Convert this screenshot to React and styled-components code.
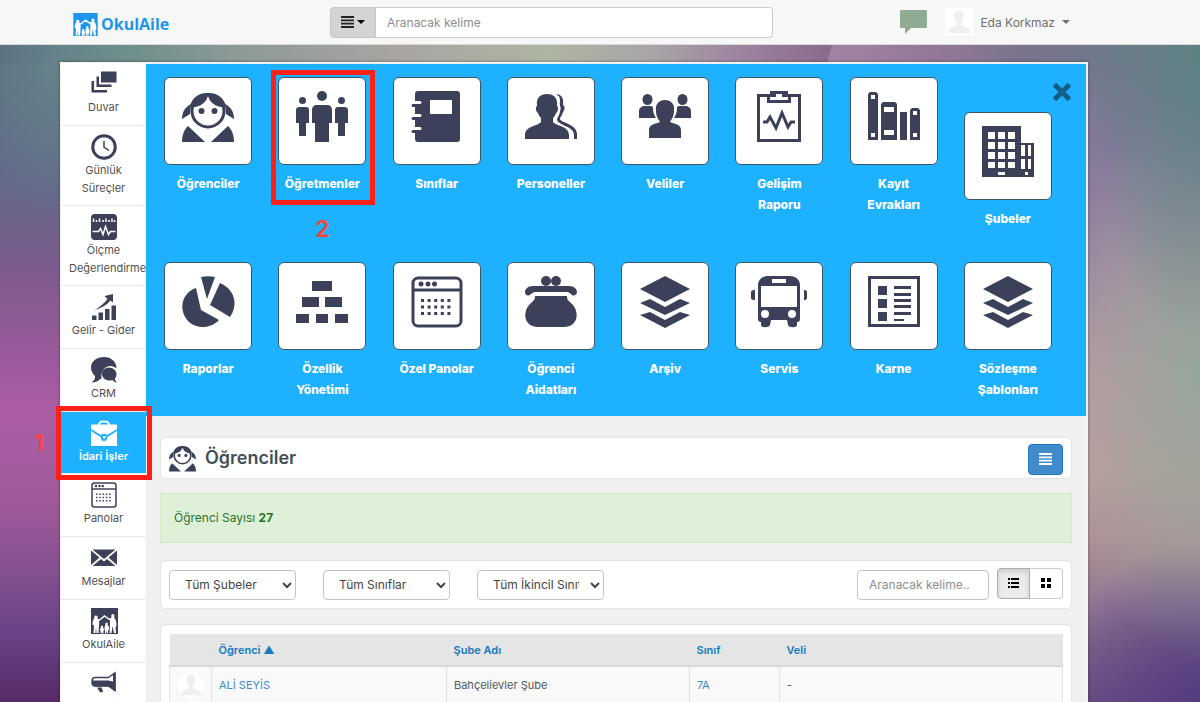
import React, { useState } from "react";
import styled, { createGlobalStyle, css } from "styled-components";

const INK = "#3c4159";
const BLUE = "#1eb1ff";

const GlobalStyle = createGlobalStyle`
  * {
    box-sizing: border-box;
  }
  body {
    margin: 0;
    font-family: Inter, "Noto Sans", sans-serif;
    font-size: 12px;
    color: #555;
  }
  button, input, select {
    font-family: inherit;
  }
  a {
    color: #428bca;
    text-decoration: none;
  }
`;

const Page = styled.div`
  height: 100vh;
  overflow: hidden;
  display: flex;
  flex-direction: column;
  background:
    linear-gradient(105deg, transparent 803px, rgba(175, 145, 175, 0.65) 804px, transparent 980px) 0 45px / 100% 20px no-repeat,
    linear-gradient(90deg, #5b7282 0, #66838a 60px, #6f8f8c 130px, #8d9a98 240px, #a9a5a2 400px, #aeb5a2 550px, #a9a5a7 650px, #9d86a0 735px, #8a6a8a 830px, #87708d 940px, #73788c 1080px, #5e8284 1200px) 0 45px / 100% 18px no-repeat,
    radial-gradient(ellipse 90px 150px at 60px 0, #66838a, transparent) 0 63px / 60px 200px no-repeat,
    radial-gradient(ellipse 112px 280px at 100% 0, #5e8284, transparent) 100% 63px / 112px 640px no-repeat,
    radial-gradient(ellipse 140px 290px at 100% 310px, #97a69a, transparent) 100% 63px / 112px 640px no-repeat,
    radial-gradient(ellipse 150px 160px at 100% 640px, #553c80, transparent) 100% 63px / 112px 640px no-repeat,
    linear-gradient(180deg, #5b7282 63px, #65698a 190px, #7d5b8d 270px, #a05a9f 370px, #ab5ea5 410px, #a05a9c 500px, #85508f 570px, #6a4487 630px, #552a66 702px) 0 0 / 60px 100% no-repeat,
    linear-gradient(180deg, #73788c 63px, #85799a 150px, #95809f 220px, #a88fa4 300px, #b89ba1 380px, #bb9e9e 470px, #ae9296 540px, #937a94 600px, #7b6389 650px, #6b4f84 702px) 100% 0 / 112px 100% no-repeat,
    #8a6a8a;
`;

const Header = styled.header`
  flex: none;
  height: 45px;
  padding: 0 112px 0 60px;
  background: #f7f7f7;
  border-bottom: 1px solid #d8d8d8;
  display: grid;
  grid-template-columns: 270px 1fr 315px;
  align-items: center;
`;

const Logo = styled.a`
  display: flex;
  align-items: center;
  gap: 3px;
  padding: 4px 0 0 13px;
  color: #1c96ec;
  font-family: "Open Sans", "Noto Sans", sans-serif;
  font-size: 16px;
  line-height: 24px;
  font-weight: 700;
`;

const SearchGroup = styled.div`
  display: flex;
  height: 31px;
`;

const SearchType = styled.button`
  width: 46px;
  padding: 0;
  display: flex;
  align-items: center;
  justify-content: center;
  gap: 3px;
  border: 1px solid #c6c6c6;
  border-radius: 4px 0 0 4px;
  background: #d4d4d4;
`;

const SearchInput = styled.input`
  flex: 1;
  min-width: 0;
  padding: 0 11px;
  border: 1px solid #ccc;
  border-left: 0;
  border-radius: 0 4px 4px 0;
  background: #fff;
  font-size: 12px;
  &::placeholder {
    color: #8e8e8e;
  }
`;

const UserArea = styled.div`
  display: flex;
  align-items: center;
  justify-content: flex-end;
  padding-right: 18px;
`;

const IconButton = styled.button`
  display: flex;
  padding: 0;
  border: 0;
  background: none;
`;

const UserMenu = styled.button`
  display: flex;
  align-items: center;
  gap: 7px;
  margin-left: 18px;
  padding: 0;
  border: 0;
  background: none;
  color: #6f6f6f;
  font-size: 12px;
`;

const Caret = styled.span`
  border: 4px solid transparent;
  border-top-color: currentColor;
  border-bottom: 0;
`;

const Wrap = styled.div`
  flex: 1;
  min-height: 0;
  margin: 17px 112px 0 60px;
  display: flex;
  border: 1px solid #f2f2f2;
  border-right-width: 2px;
  border-bottom: 0;
  background: #f0f0f0;
  box-shadow: 0 0 3px rgba(0, 0, 0, 0.4);
`;

const Sidebar = styled.nav`
  flex: none;
  width: 85px;
  background: #fff;
`;

const SideItem = styled.div`
  position: relative;
`;

const SideLink = styled.a`
  display: block;
  min-height: ${p => (p.$active ? 62 : 63)}px;
  padding: 8px;
  border-bottom: 1px solid #e9e9e9;
  overflow: hidden;
  color: #505050;
  font-size: 11px;
  line-height: 18px;
  text-align: center;
  svg {
    display: block;
    margin: 0 auto 1px;
  }
  ${p =>
    p.$active &&
    css`
      background: ${BLUE};
      color: #fff;
      font-weight: 600;
    `}
`;

const Main = styled.main`
  flex: 1;
  min-width: 0;
  overflow: hidden;
`;

const MenuPanel = styled.section`
  display: grid;
  grid-template-columns: repeat(8, 1fr);
  row-gap: 33px;
  margin-top: 1px;
  padding: 13px 21px 16px 5px;
  background: ${BLUE};
`;

const MenuCell = styled.div`
  position: relative;
  display: flex;
  flex-direction: column;
  align-items: center;
`;

const CloseButton = styled.button`
  height: 35px;
  align-self: flex-end;
  margin-right: -7px;
  padding: 5px 0 10px;
  border: 0;
  background: none;
`;

const MenuLink = styled.a`
  display: flex;
  flex-direction: column;
  align-items: center;
  gap: 8px;
  width: 82px;
  color: #fff;
  font-size: 12px;
  font-weight: 800;
  line-height: 21px;
  text-align: center;
`;

const Tile = styled.span`
  flex: none;
  width: 88px;
  height: 88px;
  padding-top: 13px;
  display: flex;
  justify-content: center;
  border: 1px solid #3d5666;
  border-radius: 6px;
  background: #fff;
`;

// red frame laid over the steps of the guide
const Frame = styled.span`
  position: absolute;
  border: 5px solid #fb2018;
  inset: ${p => p.$inset};
  z-index: 2;
  pointer-events: none;
`;

const StepNumber = styled.span`
  position: absolute;
  left: ${p => p.$left};
  top: ${p => p.$top};
  transform: translate(-50%, -50%);
  color: #ff4133;
  font-size: 23px;
  line-height: 24px;
  font-weight: 600;
`;

const Content = styled.div`
  padding: 21px 14px 0;
  display: flex;
  flex-direction: column;
`;

const Box = styled.section`
  border: 1px solid #e4e4e4;
  border-radius: 5px;
  background: #fff;
  padding: 8px;
`;

const TitleBar = styled(Box)`
  display: flex;
  align-items: center;
  height: 42px;
`;

const Title = styled.h1`
  flex: 1;
  margin: 0 0 0 9px;
  color: #3f4f58;
  font-size: 18px;
  line-height: 24px;
  font-weight: 600;
`;

const PrimaryButton = styled.button`
  width: 35px;
  height: 31px;
  padding: 0;
  margin-top: 2px;
  display: flex;
  align-items: center;
  justify-content: center;
  border: 1px solid #1f78bf;
  border-radius: 4px;
  background: #428bca;
`;

const Notice = styled.p`
  margin: 14px 0 17px;
  padding: 15px 13px;
  border: 1px solid #d6e9c6;
  background: #dff0d8;
  color: #2b722d;
  font-size: 12px;
  line-height: 18px;
`;

const FilterBar = styled(Box)`
  display: flex;
  align-items: center;
  gap: 27px;
  height: 49px;
`;

const SelectBox = styled.select`
  width: 127px;
  height: 30px;
  padding: 0 8px 0 11px;
  border: 1px solid #c4c4c4;
  border-radius: 4px;
  background: #fff;
  color: #444;
  font-size: 12px;
`;

const FilterRight = styled.div`
  display: flex;
  align-items: center;
  gap: 8px;
  margin-left: auto;
`;

const FilterInput = styled.input`
  width: 132px;
  height: 30px;
  padding: 0 11px;
  border: 1px solid #c4c4c4;
  border-radius: 4px;
  font-size: 12px;
  &::placeholder {
    color: #8e8e8e;
  }
`;

const ToggleGroup = styled.div`
  display: flex;
  margin-top: -3px;
`;

const Toggle = styled.button`
  width: 33px;
  height: 31px;
  padding: 0;
  display: flex;
  align-items: center;
  justify-content: center;
  border: 1px solid #ccc;
  border-radius: 0 4px 4px 0;
  background: #fff;
  & + & {
    border-left: 0;
  }
  &:first-child {
    border-radius: 4px 0 0 4px;
  }
  ${p =>
    p.$on &&
    css`
      border-color: #adadad;
      background: #ebebeb;
      box-shadow: inset 0 3px 5px rgba(0, 0, 0, 0.125);
    `}
`;

const TableBox = styled(Box)`
  margin-top: 15px;
  padding-top: 9px;
`;

const Table = styled.table`
  width: 100%;
  border-collapse: collapse;
  table-layout: fixed;
  font-size: 11px;
  line-height: 16px;
  th {
    height: 32px;
    padding: 0 7px;
    background: #e5e5e5;
    border-bottom: 2px solid #d9d9d9;
    text-align: left;
    font-weight: 600;
    a {
      color: #147ac4;
    }
  }
  td {
    height: 38px;
    padding: 0 7px;
    background: #f9f9f9;
    border: 1px solid #e2e2e2;
    color: #4f5a61;
  }
`;

const PhotoCell = styled.td`
  svg {
    display: block;
    margin: auto;
  }
`;

/* ---------- icons ---------- */

const familyFigures = (
  <>
    <path d="M10 23l7 1 10-8 10 7 8-4" fill="none" stroke="#fff" strokeWidth="3" />
    <path
      fill="#fff"
      d="M9 15a4 4 0 014 6c3 2 4 7 3 13l-1 16h-4l-1-12-1 12H5l1-15-3-2c0-6 1-10 4-13-1-3 0-5 2-5zM43 12c4 0 5 4 3 7 4 3 5 10 5 17l-2 2 1 12h-4l-3-14-2 14h-4l1-19c-1-6 0-9 3-12-1-4 0-7 2-7z"
    />
    <path
      fill="#fff"
      d="M31 29c3 0 3 3 2 5 3 1 3 5 3 9l-2 2v6h-2l-1-6-1 6h-2v-6l-1-2c0-4 0-7 2-9-1-3 0-5 2-5zM22 35c2 0 3 2 2 4l2 3-1 5v4h-2l-1-4-1 4h-2v-4l-1-5 2-3c-1-2 0-4 2-4z"
    />
  </>
);

const icons = {
  wall: (
    <>
      <path d="M20 1h31v22H20z" />
      <path d="M11 11h5v16h25v5H11z" />
      <path d="M1 20h5v18h26v5H1z" />
    </>
  ),
  clock: (
    <>
      <circle cx="26" cy="26" r="22.500" fill="none" stroke="currentColor" strokeWidth="6" />
      <path d="M26 14v12l10 7" fill="none" stroke="currentColor" strokeWidth="3" />
    </>
  ),
  measure: (
    <>
      <rect width="52" height="52" rx="8" />
      <path
        d="M5 9v7M11 12v4M17 9v7M24 12v4M30 9v7M36 12v4M42 9v7M47 12v4"
        stroke="#fff"
        strokeWidth="3"
      />
      <path d="M3 35h12l4-6 5 12 5-16 6 16 4-6h10" fill="none" stroke="#fff" strokeWidth="3" />
    </>
  ),
  income: (
    <>
      <path d="M2 43h9v9H2zM15 37h9v15h-9zM28 30h9v22h-9zM41 23h9v29h-9z" />
      <path d="M7 32C18 26 26 19 33 10l-6-6 17-4v17l-5-4C30 23 20 29 7 32z" />
    </>
  ),
  chat: (
    <>
      <path d="M26 0C11 0 0 9 0 21c0 8 4 13 8 17 1 5-2 9-7 13 8 0 14-3 17-7h3c-2-13 5-25 17-26 6 0 10 2 13 5C51 9 40 0 26 0z" />
      <path d="M36 21c-8 0-14 6-14 13s6 13 14 13c3 0 5 0 7-1 2 3 5 5 9 5-3-3-4-5-4-8 2-3 3-5 3-9 0-7-7-13-15-13z" />
    </>
  ),
  briefcase: (
    <>
      <path d="M14 10c0-6 4-9 12-9s12 3 12 9h-4c0-4-2-5-8-5s-8 1-8 5z" />
      <path d="M0 9h52v9L31 31v-3H21v3L0 18z" />
      <path d="M0 22l20 13c0 4 1 7 6 7s6-3 6-7l20-13v30H0z" />
      <path d="M24 32h5v3c0 3-5 3-5 0z" />
    </>
  ),
  board: (
    <>
      <rect x="2" y="2" width="48" height="48" rx="5" fill="none" stroke="currentColor" strokeWidth="3" />
      <path d="M2 14h48" stroke="currentColor" strokeWidth="3" />
      <circle cx="10" cy="8" r="2.500" />
      <circle cx="17" cy="8" r="2.500" />
      <circle cx="23.500" cy="8" r="2.500" />
      <path
        d="M10 24.500h30M10 31h30M10 37.500h30"
        stroke="currentColor"
        strokeWidth="3"
        strokeDasharray="3 3.600"
      />
    </>
  ),
  mail: (
    <>
      <path d="M3 9h46L26 28z" />
      <path d="M0 11l17 14L0 40zM52 11L35 25l17 15z" />
      <path d="M3 42l17-14 6 5 6-5 17 14z" />
    </>
  ),
  family: (
    <>
      <path d="M0 0h54v52H0z" />
      {familyFigures}
    </>
  ),
  megaphone: (
    <>
      <path
        d="M35 13L48 4v35L35 30H8c-8 0-8-17 0-17z"
        fill="none"
        stroke="currentColor"
        strokeWidth="3"
      />
      <path d="M2 19h33l13 3v17L35 31H8c-4-2-6-6-6-12zM12 33h9l3 7c0 3-5 4-7 1z" />
      <path d="M44 4h5v35h-5z" />
    </>
  ),
  girl: (
    <>
      <circle cx="26" cy="20" r="16" fill="none" stroke="currentColor" strokeWidth="3" />
      <path d="M25 2c-9 0-16 6-17 14 9 1 17-4 18-12 1 8 9 13 18 12C43 8 36 2 27 2z" />
      <path d="M9 13C3 16 0 21 0 28l8-5zM43 13c6 3 9 8 9 15l-8-5z" />
      <circle cx="19.500" cy="20" r="3" />
      <circle cx="32.500" cy="20" r="3" />
      <path d="M6 35l17 16H0c0-7 2-12 6-16zM46 35L29 51h23c0-7-2-12-6-16z" />
    </>
  ),
  people: (
    <>
      <circle cx="26" cy="5" r="5" />
      <circle cx="6.500" cy="9.500" r="3.500" />
      <circle cx="45.500" cy="9.500" r="3.500" />
      <path d="M21 14h10c3 0 5 2 5 5v13h-3v19H19V32h-3V19c0-3 2-5 5-5z" />
      <path d="M4 16h6c2 0 3 1 3 3v13h-3v13H3V32H0V19c0-2 1-3 4-3zM42 16h6c3 0 4 1 4 3v13h-3v13h-7V32h-3V19c0-2 1-3 3-3z" />
    </>
  ),
  notebook: (
    <path
      fillRule="evenodd"
      d="M7 0h39c2 0 3 1 3 3v45c0 2-1 3-3 3H7c-2 0-3-1-3-3v-6H2c-2 0-2-3 0-3h7c2 0 2-3 0-3H4v-7H2c-2 0-2-3 0-3h7c2 0 2-3 0-3H4v-7H2c-2 0-2-3 0-3h7c2 0 2-3 0-3H4V3c0-2 1-3 3-3zM19 9v14h22V9z"
    />
  ),
  staff: (
    <>
      <path d="M22 3c7 0 11 4 10 12 2 1 1 6-1 7-1 3-2 4-3 5v4c3 4 16 4 16 13v4H0v-4c0-9 13-9 16-13v-4c-1-1-2-2-3-5-2-1-3-6-1-7C11 7 15 3 22 3z" />
      <path d="M31 3c6 0 8 5 7 11 2 1 2 5 0 7-1 4-3 5-3 7 1 4 17 5 17 15v5h-3v-4c0-9-15-9-17-15 0-3 3-5 3-9 2-4-1-4 0-10 0-4-1-5-4-7z" />
    </>
  ),
  parents: (
    <>
      <path d="M26 9c6 0 10 4 9 11 0 6-3 9-4 11 4 2 11 2 11 8v8H10v-8c0-6 7-6 11-8-1-2-4-5-4-11-1-7 3-11 9-11z" />
      <ellipse cx="8.500" cy="8.500" rx="5" ry="5.500" />
      <ellipse cx="43.500" cy="8.500" rx="5" ry="5.500" />
      <path d="M4 15h8l2 1c0 5 1 8 3 11H0v-6c0-4 1-4 4-6zM48 15h-8l-2 1c0 5-1 8-3 11h17v-6c0-4-1-4-4-6z" />
    </>
  ),
  report: (
    <>
      <path fillRule="evenodd" d="M4 3h13V0h18v3h13v48H4zM7 6v42h38V6h-7v6H14V6zM17 6v3h18V6h-6V3h-6v3z" />
      <path d="M10 31h4l3-5 6 11 6-15 6 14 3-5h4" fill="none" stroke="currentColor" strokeWidth="3" />
    </>
  ),
  binders: (
    <path
      fillRule="evenodd"
      d="M2 1h6l2 2v46H0V3zM3 4v4h4V4zM3 42v4h4v-4zM15 11h12l2 2v36H13V13zM16 16v5h10v-5zM16 39v5h10v-5zM32 21h7v28h-7zM44 17h6l2 2v30H42V19zM45 20v4h4v-4zM45 42v4h4v-4z"
    />
  ),
  building: (
    <path
      fillRule="evenodd"
      d="M0 0h39v17h13v34H0zM6 6v7h7V6zm10 0v7h7V6zm10 0v7h7V6zM6 16v7h7v-7zm10 0v7h7v-7zm10 0v7h7v-7zM6 26v7h7v-7zm10 0v7h7v-7zm10 0v7h7v-7zM6 36v6h7v-6zm10 0v6h7v-6zm10 0v6h7v-6zM16 46v3h7v-3zM39 19v11h4V19zm7 0v11h3V19zM39 33v10h4V33zm7 0v10h3V33zM43 46v3h3v-3z"
    />
  ),
  pie: (
    <>
      <path d="M19 1c5-1 9-1 14 0L25 23z" />
      <path d="M38 7c14 6 19 21 10 34L28 29z" />
      <path d="M14 12l5 22 18 10c-8 9-22 9-30 2C-4 35-1 17 14 12z" />
    </>
  ),
  pyramid: (
    <path d="M16 5h20v10H16zM6 21h17v10H6zM29 21h17v10H29zM0 38h13v9H0zM20 38h12v9H20zM39 38h13v9H39z" />
  ),
  purse: (
    <>
      <circle cx="21" cy="5" r="5" />
      <circle cx="31" cy="5" r="5" />
      <path d="M8 10h36c5 0 8 3 8 6 0 3-4 5-6 2l-3-2H9l-3 2c-3 3-6 1-6-2 0-3 3-6 8-6z" />
      <path d="M10 20h32c0 4 1 4 5 8 8 8 6 23-8 23H13C-1 51-3 36 5 28c4-4 5-4 5-8z" />
    </>
  ),
  layers: (
    <path d="M26 0l25 13-25 13L1 13zM11 23l15 8 15-8 10 4-25 12L1 27zM11 36l15 8 15-8 10 3-25 13L1 39z" />
  ),
  bus: (
    <>
      <path
        fillRule="evenodd"
        d="M15 0h22c6 0 10 4 10 9v34c0 2-1 3-3 3v3c0 3-8 3-9 0l-1-5H18l-1 5c-1 3-9 3-9 0v-3c-2 0-3-1-3-3V9c0-5 4-9 10-9zM19 3v4h14V3zM8 10v21h36V10zM12 34a4 4 0 100 8 4 4 0 000-8zM39 34a4 4 0 100 8 4 4 0 000-8z"
      />
      <path d="M1 14h1v10H1c-2 0-3-1-3-2v-6c0-1 1-2 3-2zM51 14h1c1 0 2 1 2 2v6c0 1-1 2-2 2h-1z" />
    </>
  ),
  card: (
    <path
      fillRule="evenodd"
      d="M0 0h52v51H0zM3 3v45h46V3zM10 10h9v9h-9zM10 23h9v9h-9zM10 36h9v9h-9zM26 10h17v3H26zM26 17h17v3H26zM26 23h17v3H26zM26 29h17v3H26zM26 36h17v3H26zM26 43h10v2H26z"
    />
  )
};

const Icon = ({ name, size = 52, color = INK }) => (
  <svg
    width={size}
    height={size}
    viewBox="0 0 52 52"
    fill="currentColor"
    color={color}
    overflow="visible"
    aria-hidden="true"
  >
    {icons[name]}
  </svg>
);

const Person = ({ size, round }) => (
  <svg width={size} height={size} viewBox="0 0 28 28" aria-hidden="true">
    <rect width="28" height="28" rx={round ? 14 : 0} fill="#fff" />
    <path
      fill="#f0f0f0"
      d="M14 2.500c4 0 5 3 4.500 7-.3 3-1.500 4-2 5v2.500c2 2.500 8.500 2 8.500 6v2H3.500v-2c0-4 6.500-3.500 8-6v-2.500c-.5-1-1.700-2-2-5C9 5.500 10 2.500 14 2.500z"
    />
  </svg>
);

const Bars = ({ color = "#222" }) => (
  <svg width="13" height="12" viewBox="0 0 13 12" aria-hidden="true">
    <path d="M0 1h13M0 4.300h13M0 7.600h13M0 11h13" stroke={color} strokeWidth="1.800" />
  </svg>
);

/* ---------- data ---------- */

const sideItems = [
  { icon: "wall", label: "Duvar" },
  { icon: "clock", label: "Günlük Süreçler" },
  { icon: "measure", label: "Ölçme Değerlendirme" },
  { icon: "income", label: "Gelir - Gider" },
  { icon: "chat", label: "CRM" },
  { icon: "briefcase", label: "İdari İşler", active: true, step: "1" },
  { icon: "board", label: "Panolar" },
  { icon: "mail", label: "Mesajlar" },
  { icon: "family", label: "OkulAile" },
  { icon: "megaphone", label: "Yeni" }
];

const menuItems = [
  { icon: "girl", label: "Öğrenciler" },
  { icon: "people", label: "Öğretmenler", step: "2" },
  { icon: "notebook", label: "Sınıflar" },
  { icon: "staff", label: "Personeller" },
  { icon: "parents", label: "Veliler" },
  { icon: "report", label: "Gelişim Raporu" },
  { icon: "binders", label: "Kayıt Evrakları" },
  { icon: "building", label: "Şubeler", close: true },
  { icon: "pie", label: "Raporlar" },
  { icon: "pyramid", label: "Özellik Yönetimi" },
  { icon: "board", label: "Özel Panolar" },
  { icon: "purse", label: "Öğrenci Aidatları" },
  { icon: "layers", label: "Arşiv" },
  { icon: "bus", label: "Servis" },
  { icon: "card", label: "Karne" },
  { icon: "layers", label: "Sözleşme Şablonları" }
];

const filters = ["Tüm Şubeler", "Tüm Sınıflar", "Tüm İkincil Sınıflar"];

const students = [{ name: "ALİ SEYİS", branch: "Bahçelievler Şube", room: "7A", parent: "-" }];

const App = () => {
  const [view, setView] = useState("list");

  return (
    <Page>
      <GlobalStyle />
      <Header>
        <Logo href="#">
          <svg width="25" height="23" viewBox="0 0 54 51" fill="currentColor" aria-hidden="true">
            {icons.family}
          </svg>
          OkulAile
        </Logo>
        <SearchGroup>
          <SearchType type="button" aria-label="Arama türü">
            <Bars />
            <Caret />
          </SearchType>
          <SearchInput type="text" placeholder="Aranacak kelime" aria-label="Aranacak kelime" />
        </SearchGroup>
        <UserArea>
          <IconButton type="button" aria-label="Mesajlar">
            <svg width="27" height="24" viewBox="0 0 27 24" fill="#8fac92" aria-hidden="true">
              <path d="M1 0h25l1 1v16l-1 1H11l-6 6v-6H1l-1-1V1z" />
            </svg>
          </IconButton>
          <UserMenu type="button">
            <Person size={28} />
            Eda Korkmaz
            <Caret />
          </UserMenu>
        </UserArea>
      </Header>

      <Wrap>
        <Sidebar>
          {sideItems.map(item => (
            <SideItem key={item.label}>
              <SideLink href="#" $active={item.active}>
                <Icon name={item.icon} size={26} color={item.active ? "#fff" : INK} />
                {item.label}
              </SideLink>
              {item.step && (
                <>
                  <Frame $inset="-6px -6px -6px -5px" />
                  <StepNumber $left="-22px" $top="50%">
                    {item.step}
                  </StepNumber>
                </>
              )}
            </SideItem>
          ))}
        </Sidebar>

        <Main>
          <MenuPanel>
            {menuItems.map(item => (
              <MenuCell key={item.label}>
                {item.close && (
                  <CloseButton type="button" aria-label="Kapat">
                    <svg width="20" height="20" viewBox="0 0 20 20" aria-hidden="true">
                      <path d="M2.500 2.500l15 15M17.500 2.500l-15 15" stroke="#125f8a" strokeWidth="5" />
                    </svg>
                  </CloseButton>
                )}
                <MenuLink href="#">
                  <Tile>
                    <Icon name={item.icon} />
                  </Tile>
                  {item.label}
                </MenuLink>
                {item.step && (
                  <>
                    <Frame $inset="-7px 5px 24px 6px" />
                    <StepNumber $left="50%" $top="100%">
                      {item.step}
                    </StepNumber>
                  </>
                )}
              </MenuCell>
            ))}
          </MenuPanel>

          <Content>
            <TitleBar>
              <Icon name="girl" size={27} />
              <Title>Öğrenciler</Title>
              <PrimaryButton type="button" aria-label="Menü">
                <Bars color="#fff" />
              </PrimaryButton>
            </TitleBar>

            <Notice>
              Öğrenci Sayısı <b>27</b>
            </Notice>

            <FilterBar>
              {filters.map(name => (
                <SelectBox key={name} aria-label={name}>
                  <option>{name}</option>
                </SelectBox>
              ))}
              <FilterRight>
                <FilterInput type="text" placeholder="Aranacak kelime.." aria-label="Öğrenci ara" />
                <ToggleGroup>
                  <Toggle type="button" aria-label="Liste" $on={view === "list"} onClick={() => setView("list")}>
                    <svg width="11" height="10" viewBox="0 0 11 10" aria-hidden="true">
                      <path d="M0 0h2v2H0zM3 0h8v2H3zM0 4h2v2H0zM3 4h8v2H3zM0 8h2v2H0zM3 8h8v2H3z" />
                    </svg>
                  </Toggle>
                  <Toggle type="button" aria-label="Kartlar" $on={view === "grid"} onClick={() => setView("grid")}>
                    <svg width="10" height="10" viewBox="0 0 10 10" aria-hidden="true">
                      <path d="M0 0h4v4H0zM6 0h4v4H6zM0 6h4v4H0zM6 6h4v4H6z" />
                    </svg>
                  </Toggle>
                </ToggleGroup>
              </FilterRight>
            </FilterBar>

            <TableBox>
              <Table>
                <colgroup>
                  <col width="42" />
                  <col width="235" />
                  <col width="243" />
                  <col width="90" />
                  <col />
                </colgroup>
                <thead>
                  <tr>
                    <th />
                    <th>
                      <a href="#">Öğrenci ▲</a>
                    </th>
                    <th>
                      <a href="#">Şube Adı</a>
                    </th>
                    <th>
                      <a href="#">Sınıf</a>
                    </th>
                    <th>
                      <a href="#">Veli</a>
                    </th>
                  </tr>
                </thead>
                <tbody>
                  {students.map(s => (
                    <tr key={s.name}>
                      <PhotoCell>
                        <Person size={26} round />
                      </PhotoCell>
                      <td>
                        <a href="#">{s.name}</a>
                      </td>
                      <td>{s.branch}</td>
                      <td>
                        <a href="#">{s.room}</a>
                      </td>
                      <td>{s.parent}</td>
                    </tr>
                  ))}
                </tbody>
              </Table>
            </TableBox>
          </Content>
        </Main>
      </Wrap>
    </Page>
  );
};

export default App;
